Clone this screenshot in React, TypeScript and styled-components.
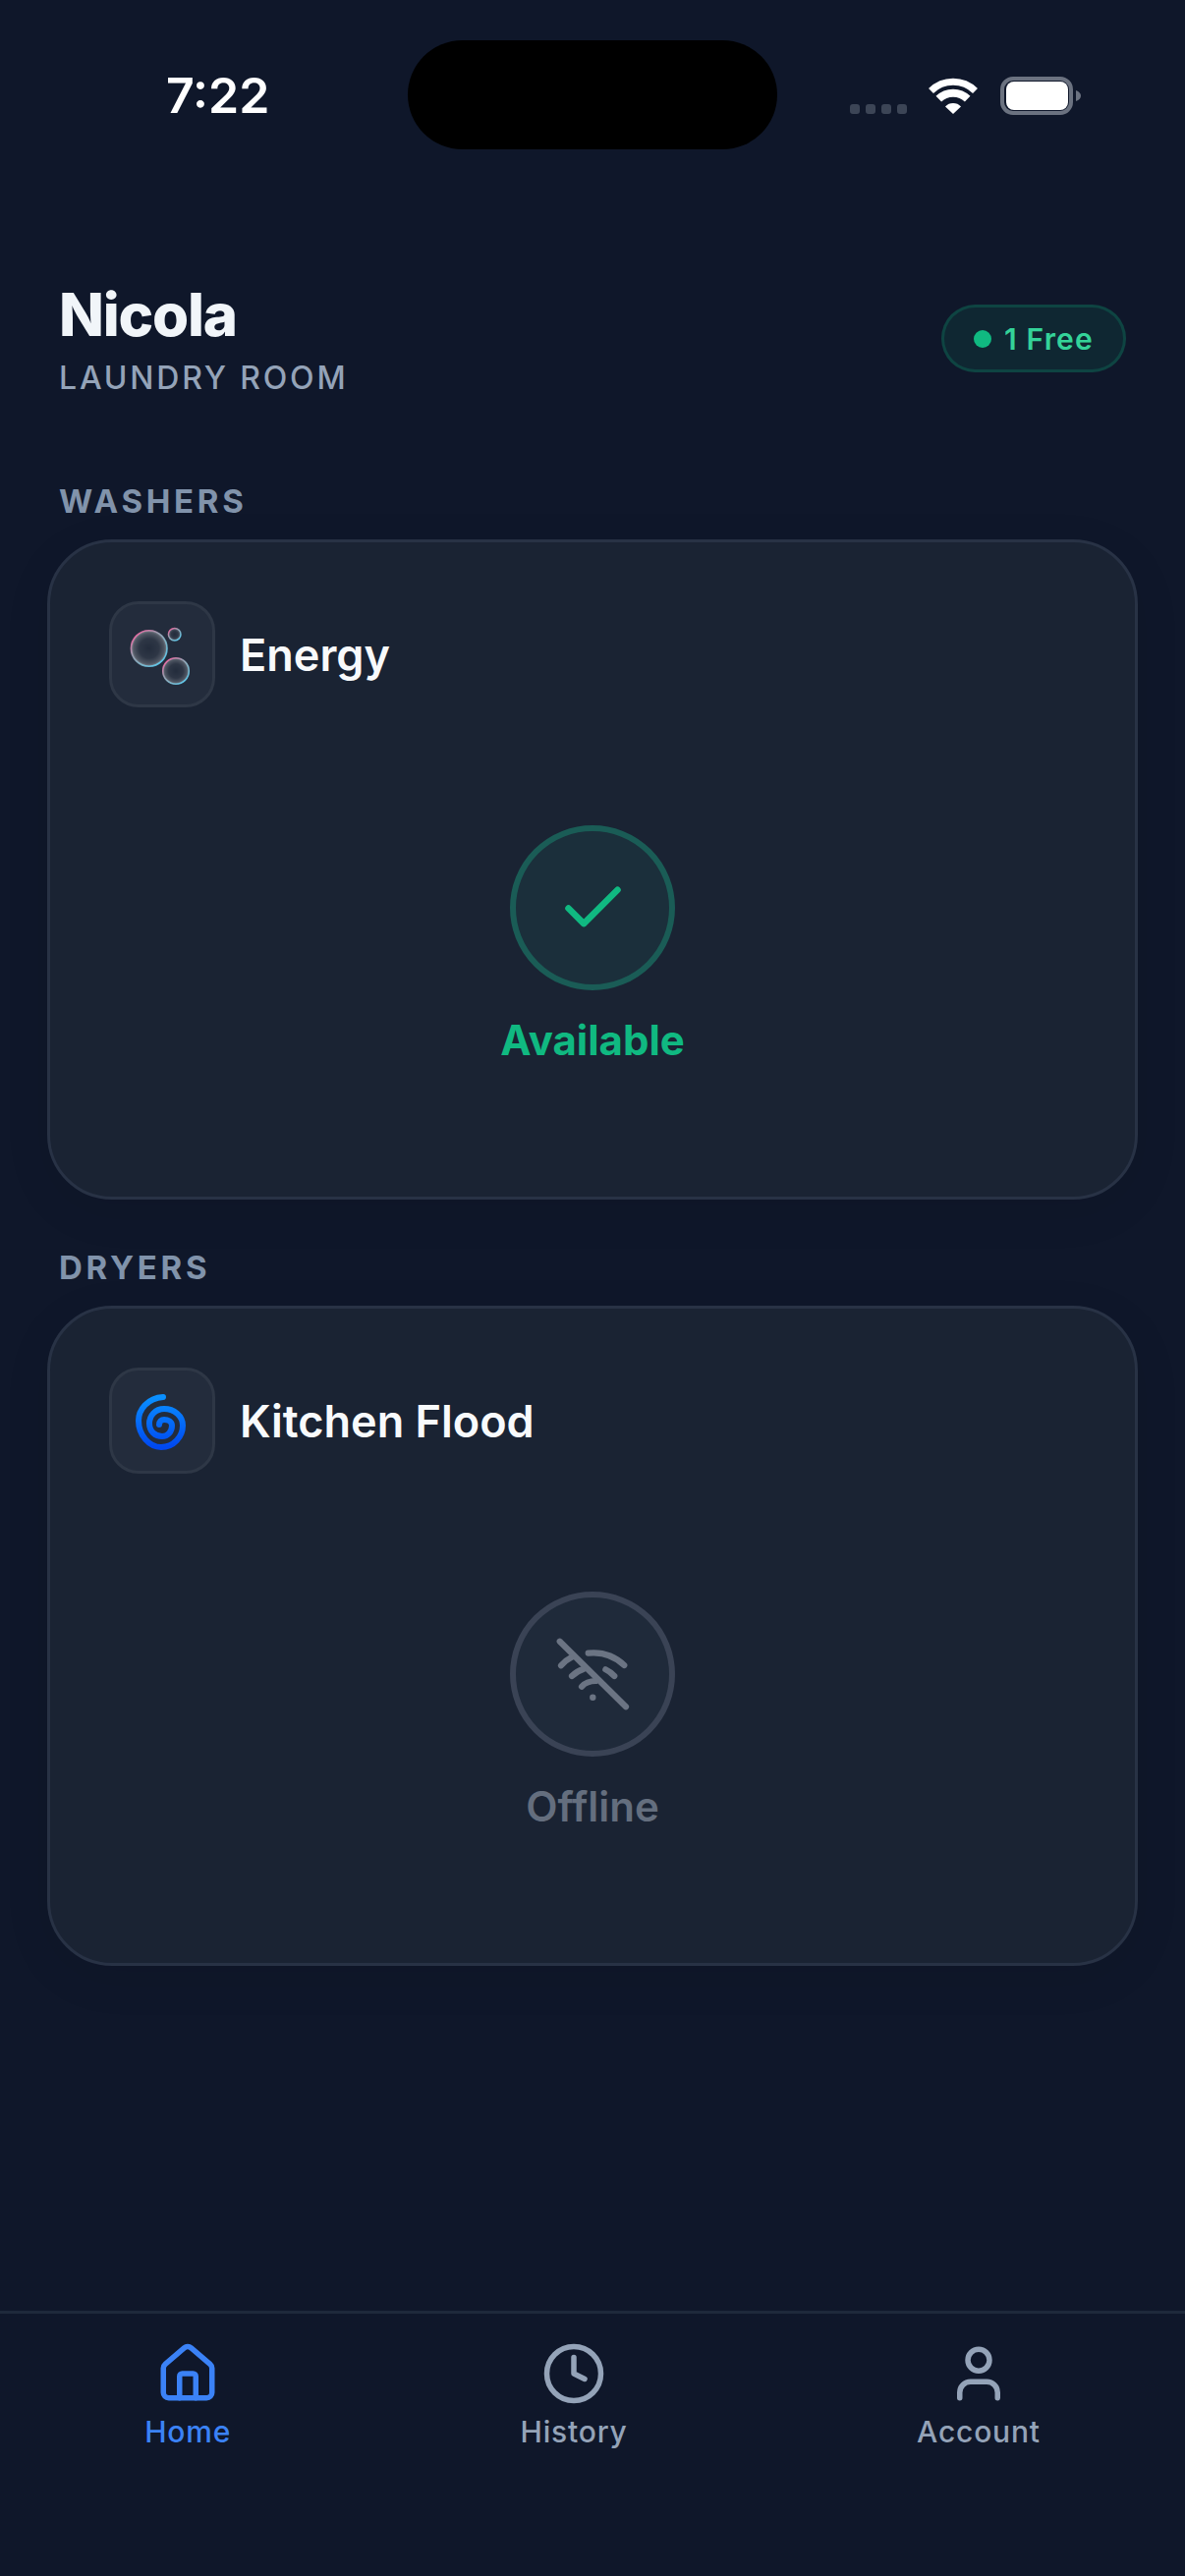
import React from 'react';
import styled, { createGlobalStyle } from 'styled-components';
import { House, Clock, User, Check } from 'lucide-react';

const GlobalStyle = createGlobalStyle`
  html, body {
    margin: 0;
    padding: 0;
    background-color: #0f172a;
  }
  * {
    box-sizing: border-box;
  }
`;

const Page = styled.div`
  width: 1206px;
  height: 2622px;
  display: flex;
  flex-direction: column;
  background-color: #0f172a;
  font-family: Inter, "Noto Sans", sans-serif;
  color: #f8fafc;
  overflow: hidden;
`;

// Status bar
const StatusBar = styled.div`
  display: flex;
  align-items: flex-end;
  height: 152px;
  padding-top: 41px;
`;

const Time = styled.div`
  width: 415px;
  height: 111px;
  padding: 0 0 0 169px;
  display: flex;
  align-items: center;
  font-size: 50px;
  font-weight: 600;
  line-height: 1;
  color: #ffffff;
`;

const Island = styled.div`
  width: 376px;
  height: 111px;
  border-radius: 56px;
  background-color: #000000;
`;

const StatusIcons = styled.div`
  display: flex;
  align-items: flex-end;
  height: 75px;
  margin-left: 74px;
  padding-bottom: 36px;
`;

const SignalDots = styled.div`
  display: flex;
  gap: 6px;
  margin-right: 22px;
`;

const SignalDot = styled.span`
  width: 10px;
  height: 10px;
  border-radius: 3px;
  background-color: #3c4556;
`;

const WifiGlyph = styled.svg`
  width: 50px;
  height: 37px;
  margin-right: 23px;
`;

const BatteryGlyph = styled.svg`
  width: 82px;
  height: 39px;
  margin-bottom: -1px;
`;

// Header
const Header = styled.header`
  display: flex;
  align-items: center;
  justify-content: space-between;
  margin-top: 132px;
  padding: 0 60px;
`;

const Title = styled.h1`
  margin: 0;
  font-size: 60px;
  font-weight: 800;
  line-height: 72px;
  letter-spacing: -1.2px;
  color: #f1f5f9;
`;

const Subtitle = styled.div`
  margin-top: 9px;
  font-size: 32px;
  font-weight: 500;
  line-height: 40px;
  letter-spacing: 2.8px;
  color: #94a3b8;
`;

const FreeBadge = styled.div`
  display: flex;
  align-items: center;
  gap: 13px;
  height: 69px;
  padding: 0 30px;
  border: 3px solid rgba(16, 185, 129, 0.2);
  border-radius: 35px;
  background-color: rgba(16, 185, 129, 0.1);
  font-size: 30px;
  font-weight: 600;
  letter-spacing: 1.2px;
  color: #34d399;
`;

const BadgeDot = styled.span`
  width: 18px;
  height: 18px;
  border-radius: 50%;
  background-color: #10b981;
`;

// Machine sections
const Sections = styled.main`
  padding: 0 48px;
`;

const Section = styled.section`
  margin-top: 49px;

  &:first-child {
    margin-top: 85px;
  }
`;

const SectionLabel = styled.h2`
  margin: 0 0 19px;
  padding-left: 12px;
  font-size: 33px;
  font-weight: 700;
  line-height: 40px;
  letter-spacing: 3.7px;
  color: #8193ab;
`;

const Card = styled.div`
  height: 672px;
  padding: 60px;
  border: 3px solid #283245;
  border-radius: 66px;
  background-color: #1a2333;
  box-shadow: 0 12px 48px rgba(0, 0, 0, 0.08);
`;

const CardHead = styled.div`
  display: flex;
  align-items: center;
  gap: 25px;
`;

const IconBox = styled.div`
  display: flex;
  align-items: center;
  justify-content: center;
  width: 108px;
  height: 108px;
  border: 3px solid #2e3746;
  border-radius: 30px;
  background-color: #232c3c;
`;

const MachineName = styled.div`
  padding-top: 2px;
  font-size: 45px;
  font-weight: 600;
  line-height: 54px;
  color: #f8fafc;
`;

const CardBody = styled.div`
  display: flex;
  flex-direction: column;
  align-items: center;
  gap: 26px;
  padding-top: 120px;
`;

const StatusCircle = styled.div<{ $online: boolean }>`
  display: flex;
  align-items: center;
  justify-content: center;
  width: 168px;
  height: 168px;
  border: 6px solid ${(p) => (p.$online ? '#1a5c56' : '#3a4355')};
  border-radius: 50%;
  background-color: ${(p) => (p.$online ? '#1b2f3b' : '#1f2a3a')};
  color: ${(p) => (p.$online ? '#10b981' : '#6b7483')};
`;

const StatusText = styled.div<{ $online: boolean }>`
  font-size: 42px;
  font-weight: ${(p) => (p.$online ? 700 : 600)};
  line-height: 50px;
  color: ${(p) => (p.$online ? '#10b981' : '#646e7e')};
`;

// Tab bar
const TabBar = styled.nav`
  display: flex;
  justify-content: space-around;
  margin-top: auto;
  height: 270px;
  padding-top: 28px;
  border-top: 3px solid #1e293b;
`;

const TabItem = styled.div<{ $active?: boolean }>`
  display: flex;
  flex-direction: column;
  align-items: center;
  gap: 8px;
  color: ${(p) => (p.$active ? '#3b82f6' : '#94a3b8')};
`;

const TabLabel = styled.span`
  font-size: 30px;
  font-weight: 500;
  line-height: 36px;
  letter-spacing: 0.8px;
`;

const BubblesIcon: React.FC = () => (
  <svg width="102" height="102" viewBox="3 3 102 102">
    <defs>
      <radialGradient id="bubbleFill" cx="50%" cy="50%" r="50%">
        <stop offset="0%" stopColor="#ffffff" stopOpacity="0" />
        <stop offset="55%" stopColor="#ffffff" stopOpacity="0.05" />
        <stop offset="85%" stopColor="#ffffff" stopOpacity="0.2" />
        <stop offset="100%" stopColor="#ffffff" stopOpacity="0.42" />
      </radialGradient>
      <linearGradient id="bubbleRim" x1="15%" y1="10%" x2="85%" y2="90%">
        <stop offset="0%" stopColor="#ff6fae" />
        <stop offset="35%" stopColor="#a7a9bd" />
        <stop offset="65%" stopColor="#86c0d4" />
        <stop offset="100%" stopColor="#5fd8ff" />
      </linearGradient>
    </defs>
    <circle cx="40.7" cy="48" r="18.3" fill="url(#bubbleFill)" stroke="url(#bubbleRim)" strokeWidth="1.6" strokeOpacity="0.85" />
    <circle cx="66.7" cy="33.7" r="6.3" fill="url(#bubbleFill)" stroke="url(#bubbleRim)" strokeWidth="1.5" strokeOpacity="0.85" />
    <circle cx="68" cy="71" r="13.3" fill="url(#bubbleFill)" stroke="url(#bubbleRim)" strokeWidth="1.5" strokeOpacity="0.85" />
  </svg>
);

const SpiralIcon: React.FC = () => (
  <svg width="102" height="102" viewBox="14 15 102 102">
    <defs>
      <linearGradient id="spiralStroke" x1="0" y1="0" x2="0" y2="1">
        <stop offset="0%" stopColor="#0a90ff" />
        <stop offset="100%" stopColor="#0048f0" />
      </linearGradient>
    </defs>
    <path
      d="M66 42 C50 43 41 55 41 66 C41 81 52 93 64 93 C77 93 86 82 86 71 C86 61 77 54 67 54 C58 54 52 61 52 69 C52 77 58 82 65 82 C71 82 75 77 75 71 C75 67 71 65 67 65 C64 65 62 67 62 70"
      fill="none"
      stroke="url(#spiralStroke)"
      strokeWidth="6"
      strokeLinecap="round"
    />
  </svg>
);

const OfflineIcon: React.FC = () => (
  <svg width="80" height="80" viewBox="0 0 80 80" fill="none" stroke="currentColor" strokeWidth="6.2" strokeLinecap="round">
    <path d="M6.7 6.7 L74 73.3" />
    <path d="M35.7 18.7 Q57 16.5 72.3 31" />
    <path d="M53.3 35.3 Q58 37.5 62.3 42" />
    <path d="M8 31.3 Q12.5 26 18 23.3" />
    <path d="M19 42 Q24 37 30.7 35" />
    <path d="M29 52.7 Q34 47 43.3 47" />
    <circle cx="40.3" cy="63.7" r="3.2" fill="currentColor" stroke="none" />
  </svg>
);

const machines = [
  { section: 'WASHERS', name: 'Energy', icon: <BubblesIcon />, online: true },
  { section: 'DRYERS', name: 'Kitchen Flood', icon: <SpiralIcon />, online: false },
];

const App: React.FC = () => {
  return (
    <Page>
      <GlobalStyle />
      <StatusBar>
        <Time>7:22</Time>
        <Island />
        <StatusIcons>
          <SignalDots>
            <SignalDot />
            <SignalDot />
            <SignalDot />
            <SignalDot />
          </SignalDots>
          <WifiGlyph viewBox="0 0 50 37">
            <g fill="none" stroke="#ffffff">
              <path d="M2.5 13.5 A32 32 0 0 1 47.5 13.5" strokeWidth="7" />
              <path d="M10.3 21.7 A21 21 0 0 1 39.7 21.7" strokeWidth="8" />
            </g>
            <path d="M25 37 L17 29.5 A11 11 0 0 1 33 29.5 Z" fill="#ffffff" />
          </WifiGlyph>
          <BatteryGlyph viewBox="0 0 82 39">
            <rect x="2" y="2" width="70" height="35" rx="11" fill="none" stroke="#6b7280" strokeWidth="4" />
            <rect x="6" y="5" width="63" height="29" rx="8" fill="#ffffff" />
            <path d="M77 14 Q82 16 82 19.5 Q82 23 77 25 Z" fill="#6b7280" />
          </BatteryGlyph>
        </StatusIcons>
      </StatusBar>

      <Header>
        <div>
          <Title>Nicola</Title>
          <Subtitle>LAUNDRY ROOM</Subtitle>
        </div>
        <FreeBadge>
          <BadgeDot />
          1 Free
        </FreeBadge>
      </Header>

      <Sections>
        {machines.map((m) => (
          <Section key={m.section}>
            <SectionLabel>{m.section}</SectionLabel>
            <Card>
              <CardHead>
                <IconBox>{m.icon}</IconBox>
                <MachineName>{m.name}</MachineName>
              </CardHead>
              <CardBody>
                <StatusCircle $online={m.online}>
                  {m.online ? <Check size={75} strokeWidth={2.1} /> : <OfflineIcon />}
                </StatusCircle>
                <StatusText $online={m.online}>{m.online ? 'Available' : 'Offline'}</StatusText>
              </CardBody>
            </Card>
          </Section>
        ))}
      </Sections>

      <TabBar>
        <TabItem $active>
          <House size={66} strokeWidth={2} />
          <TabLabel>Home</TabLabel>
        </TabItem>
        <TabItem>
          <Clock size={66} strokeWidth={2} />
          <TabLabel>History</TabLabel>
        </TabItem>
        <TabItem>
          <User size={66} strokeWidth={2} />
          <TabLabel>Account</TabLabel>
        </TabItem>
      </TabBar>
    </Page>
  );
};

export default App;
